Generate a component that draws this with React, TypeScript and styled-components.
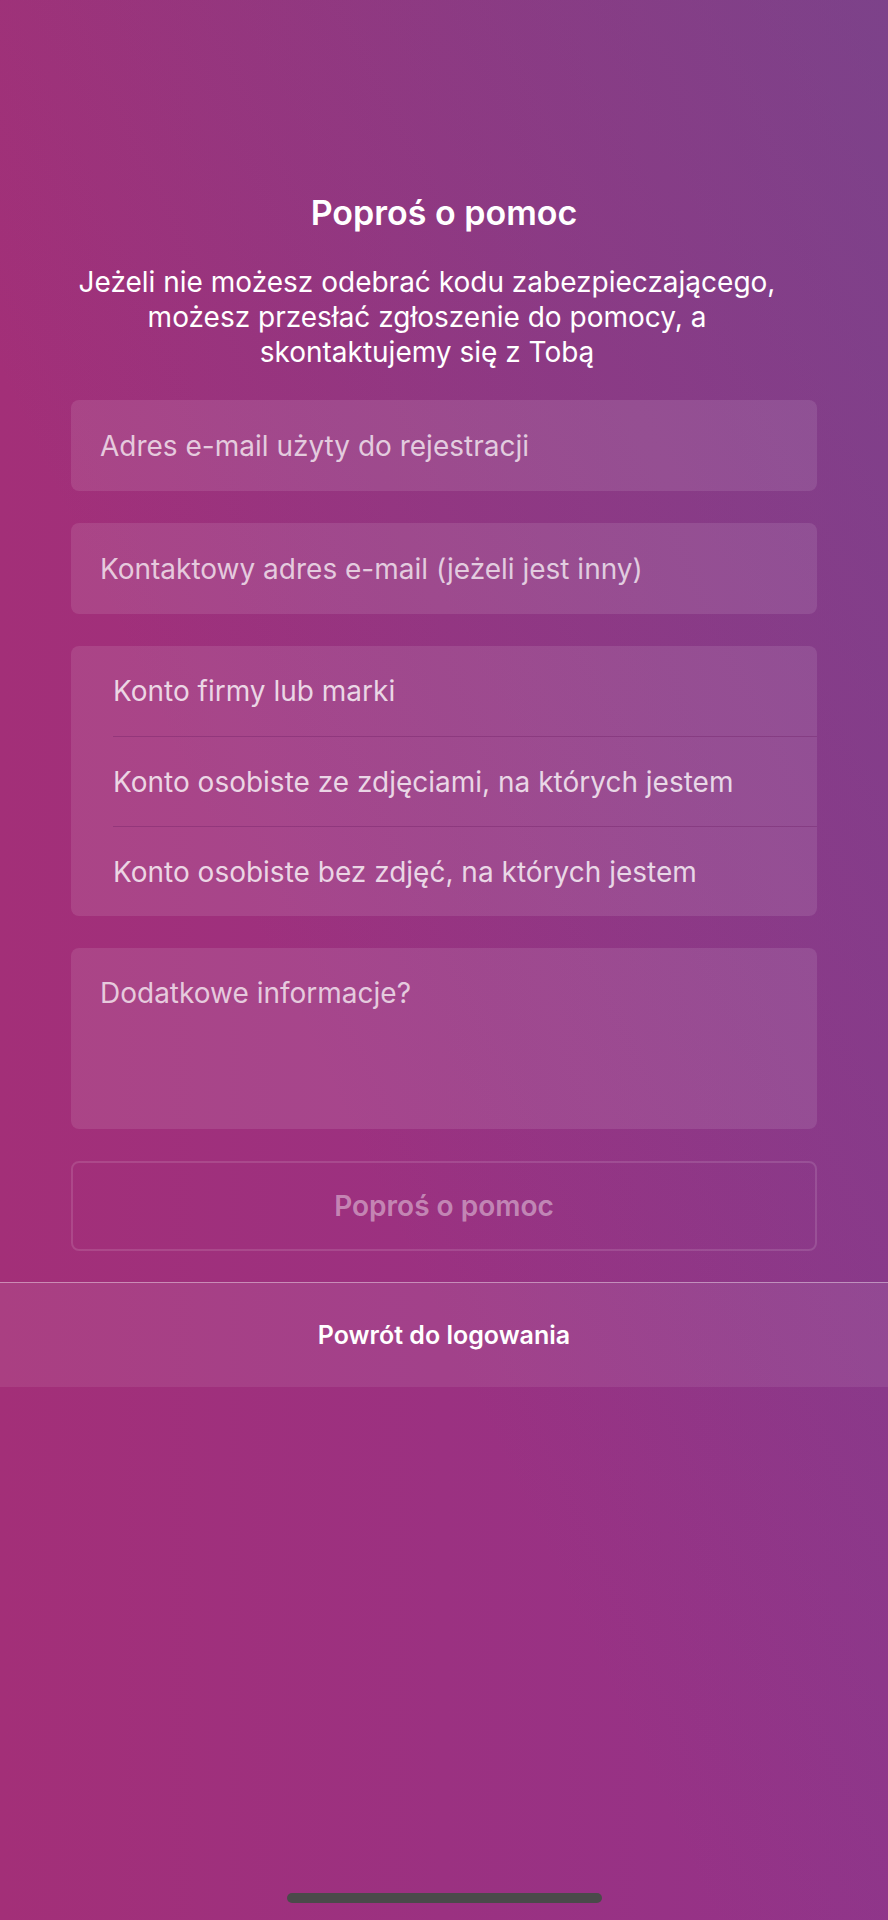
import React from 'react'
import styled, { createGlobalStyle } from 'styled-components'

const GlobalStyle = createGlobalStyle`
  html, body {
    margin: 0;
    padding: 0;
  }
  body {
    font-family: 'Inter', 'Roboto', 'Noto Sans', sans-serif;
    -webkit-font-smoothing: antialiased;
  }
  * {
    box-sizing: border-box;
  }
`

const Screen = styled.div`
  width: 888px;
  min-height: 1920px;
  background:
    linear-gradient(to bottom left, rgba(77, 98, 138, 0.32) 0%, rgba(77, 98, 138, 0) 60%),
    linear-gradient(to right, #a32f78 0%, #93338a 100%);
  display: flex;
  flex-direction: column;
  color: #fff;
`

const Content = styled.div`
  display: flex;
  flex-direction: column;
  padding: 193px 71px 0;
`

const Title = styled.h1`
  margin: 0;
  font-size: 34px;
  line-height: 40px;
  font-weight: 600;
  text-align: center;
`

const Intro = styled.p`
  margin: 32px 0 30px;
  padding-right: 34px;
  font-size: 28px;
  line-height: 35px;
  font-weight: 400;
  text-align: center;
`

const Fields = styled.div`
  display: flex;
  flex-direction: column;
  gap: 32px;
`

const Field = styled.input`
  height: 91px;
  width: 100%;
  border: 0;
  border-radius: 8px;
  padding: 0 29px;
  background: rgba(255, 255, 255, 0.1);
  color: #fff;
  font-family: inherit;
  font-size: 28px;
  outline: none;
  &::placeholder {
    color: rgba(255, 255, 255, 0.72);
  }
`

const Options = styled.div`
  display: flex;
  flex-direction: column;
  border-radius: 8px;
  background: rgba(255, 255, 255, 0.1);
  overflow: hidden;
`

const Option = styled.div<{ $divider?: boolean }>`
  height: 90px;
  margin-left: 42px;
  display: flex;
  align-items: center;
  font-size: 28px;
  color: rgba(255, 255, 255, 0.78);
  border-top: ${({ $divider }) => ($divider ? '1px solid rgba(110, 30, 100, 0.35)' : '0')};
`

const Notes = styled.textarea`
  height: 181px;
  width: 100%;
  border: 0;
  border-radius: 8px;
  padding: 29px 29px;
  background: rgba(255, 255, 255, 0.1);
  color: #fff;
  font-family: inherit;
  font-size: 28px;
  line-height: 32px;
  resize: none;
  outline: none;
  &::placeholder {
    color: rgba(255, 255, 255, 0.72);
  }
`

const SubmitButton = styled.button`
  height: 90px;
  width: 100%;
  border: 2px solid rgba(255, 255, 255, 0.12);
  border-radius: 8px;
  background: transparent;
  color: rgba(255, 255, 255, 0.42);
  font-family: inherit;
  font-size: 28px;
  font-weight: 600;
`

const Footer = styled.div`
  margin-top: 31px;
  height: 105px;
  border-top: 1px solid rgba(255, 255, 255, 0.4);
  background: rgba(255, 255, 255, 0.08);
  display: flex;
  align-items: center;
  justify-content: center;
`

const BackLink = styled.button`
  border: 0;
  background: none;
  padding: 0;
  color: #fff;
  font-family: inherit;
  font-size: 25px;
  font-weight: 600;
`

const Spacer = styled.div`
  flex: 1;
`

const HomeBar = styled.div`
  align-self: center;
  width: 315px;
  height: 10px;
  border-radius: 5px;
  background: #4a4a4a;
  margin-bottom: 17px;
`

const accountTypes = [
  'Konto firmy lub marki',
  'Konto osobiste ze zdjęciami, na których jestem',
  'Konto osobiste bez zdjęć, na których jestem',
]

export default function App() {
  return (
    <>
      <GlobalStyle />
      <Screen>
        <Content>
          <Title>Poproś o pomoc</Title>
          <Intro>
            Jeżeli nie możesz odebrać kodu zabezpieczającego,
            <br />
            możesz przesłać zgłoszenie do pomocy, a
            <br />
            skontaktujemy się z Tobą
          </Intro>
          <Fields>
            <Field type="email" placeholder="Adres e-mail użyty do rejestracji" />
            <Field type="email" placeholder="Kontaktowy adres e-mail (jeżeli jest inny)" />
            <Options>
              {accountTypes.map((label, idx) => (
                <Option key={idx} $divider={idx > 0}>
                  {label}
                </Option>
              ))}
            </Options>
            <Notes placeholder="Dodatkowe informacje?" />
            <SubmitButton disabled>Poproś o pomoc</SubmitButton>
          </Fields>
        </Content>
        <Footer>
          <BackLink>Powrót do logowania</BackLink>
        </Footer>
        <Spacer />
        <HomeBar />
      </Screen>
    </>
  )
}
